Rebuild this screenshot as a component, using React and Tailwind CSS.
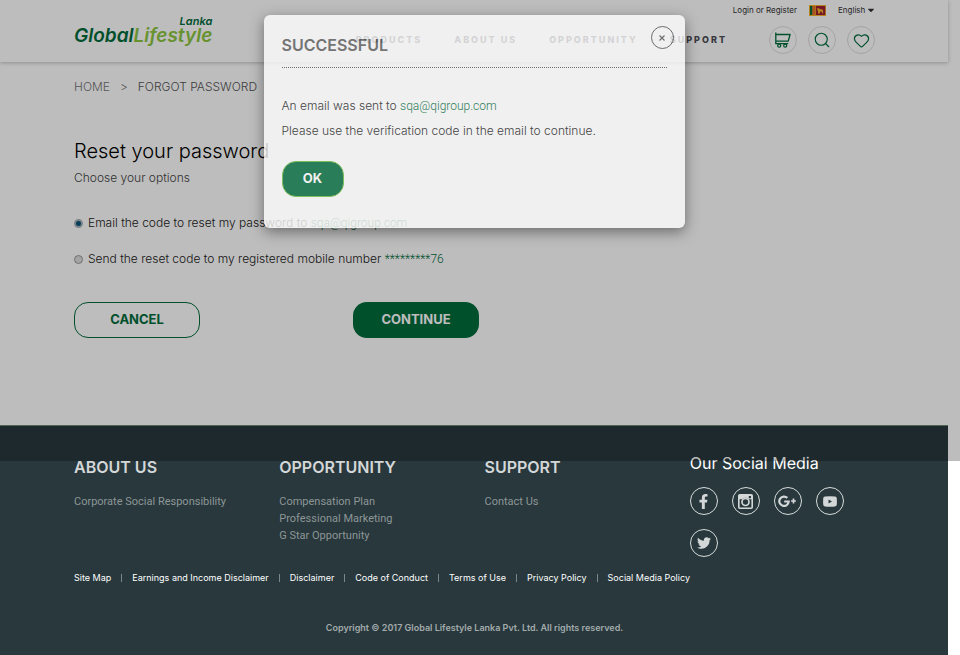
import React, { useState } from "react";
import { Search, Heart } from "lucide-react";
import { FaFacebookF, FaTwitter, FaCaretDown } from "react-icons/fa";

const navItems = ["Products", "About Us", "Opportunity", "Support"];

const footerColumns = [
  { title: "ABOUT US", links: ["Corporate Social Responsibility"] },
  {
    title: "OPPORTUNITY",
    links: ["Compensation Plan", "Professional Marketing", "G Star Opportunity"],
  },
  { title: "SUPPORT", links: ["Contact Us"] },
];

const legalLinks = [
  "Site Map",
  "Earnings and Income Disclaimer",
  "Disclaimer",
  "Code of Conduct",
  "Terms of Use",
  "Privacy Policy",
  "Social Media Policy",
];

function CartIcon() {
  return (
    <svg width="16" height="16" viewBox="0 0 16 16" fill="none" stroke="currentColor" strokeWidth="1.3">
      <path d="M.8.5v11.2h12.400" />
      <path d="M.8 2.500h14.300l-1.900 6.700H.8" strokeLinejoin="round" />
      <circle cx="4.200" cy="13.700" r="1.500" />
      <circle cx="10.200" cy="13.700" r="1.500" />
    </svg>
  );
}

function FlagIcon() {
  return (
    <svg width="17" height="11" viewBox="0 0 17 11">
      <rect width="17" height="11" fill="#f5b52a" />
      <rect x="1" y="1" width="2.5" height="9" fill="#0a6b3a" />
      <rect x="3.5" y="1" width="2.5" height="9" fill="#e8702a" />
      <rect x="6.8" y="1" width="9.4" height="9" fill="#a01f35" />
      <path d="M9 8.5V6.2L8.3 5V3.2h1.8l.8 1.1h2.2l1 .9v3.3h-1V6.8h-2.2v1.7z" fill="#f5b52a" />
    </svg>
  );
}

function InstagramIcon() {
  return (
    <svg width="15" height="15" viewBox="0 0 15 15" fill="none" stroke="currentColor">
      <rect x=".8" y=".8" width="13.4" height="13.4" rx="1" strokeWidth="1.6" />
      <path d="M1 1h13v4.200h-3.200a4.500 4.500 0 0 0-6.600 0H1z" fill="currentColor" stroke="none" />
      <circle cx="7.500" cy="8" r="3.500" strokeWidth="1.700" />
      <rect x="10.800" y="2" width="2.200" height="2.200" fill="#28383c" stroke="none" />
    </svg>
  );
}

function GooglePlusIcon() {
  return (
    <svg width="19" height="12" viewBox="0 0 19 12" fill="none" stroke="currentColor">
      <path d="M9.300 2.900A4.700 4.700 0 1 0 10.700 6.500H6.200" strokeWidth="2.200" />
      <path d="M15.500 3.600v4.800M13.100 6h4.800" strokeWidth="1.700" />
    </svg>
  );
}

function YoutubeIcon() {
  return (
    <svg width="14" height="11" viewBox="0 0 14 11" fill="currentColor">
      <path fillRule="evenodd" d="M2 .600Q7 0 12 .600 13.700.800 13.800 2.500q.200 3 0 6-.100 1.700-1.800 1.900-5 .600-10 0Q.300 10.200.200 8.500q-.200-3 0-6Q.300.800 2 .600zM5.500 3.500v4l3.500-2z" />
    </svg>
  );
}

const socialLinks = [
  { name: "Facebook", icon: <FaFacebookF size={15} /> },
  { name: "Instagram", icon: <InstagramIcon /> },
  { name: "Google Plus", icon: <GooglePlusIcon /> },
  { name: "YouTube", icon: <YoutubeIcon /> },
  { name: "Twitter", icon: <FaTwitter size={14} /> },
];

function RoundButton({ label, children }) {
  return (
    <button
      type="button"
      aria-label={label}
      className="flex size-7 items-center justify-center rounded-full border border-[#dedede] text-[#006c3c]"
    >
      {children}
    </button>
  );
}

function Header() {
  return (
    <header className="flex h-[62px] justify-between bg-white pr-[73px] pl-[74px] shadow-[0_1px_4px_rgba(0,0,0,0.25)]">
      <a href="#" className="flex flex-col items-end pt-[15px] font-semibold italic text-[#006c3c]">
        <span className="text-[11px] leading-3">Lanka</span>
        <span className="text-[19px] leading-[18px]">
          Global<span className="text-[#8cc63f]">Lifestyle</span>
        </span>
      </a>
      <div className="flex flex-col items-end">
        <div className="flex h-5 items-center gap-3 text-[8px] text-[#333]">
          <a href="#">Login or Register</a>
          <FlagIcon />
          <label className="flex items-center">
            <select aria-label="Language" className="appearance-none bg-transparent">
              <option>English</option>
            </select>
            <FaCaretDown size={10} className="-mr-px" />
          </label>
        </div>
        <div className="flex h-10 items-center gap-[42px]">
          <nav className="flex gap-8 text-[9px] font-extrabold uppercase tracking-[2px] text-[#4d4d55]">
            {navItems.map((item) => (
              <a key={item} href="#">
                {item}
              </a>
            ))}
          </nav>
          <div className="flex gap-[11px]">
            <RoundButton label="Cart">
              <CartIcon />
            </RoundButton>
            <RoundButton label="Search">
              <Search size={18} strokeWidth={1.5} />
            </RoundButton>
            <RoundButton label="Wish list">
              <Heart size={17} strokeWidth={1.7} />
            </RoundButton>
          </div>
        </div>
      </div>
    </header>
  );
}

function ResetForm() {
  const [method, setMethod] = useState("email");
  const options = [
    { id: "email", text: "Email the code to reset my password to", target: "sqa@qigroup.com" },
    { id: "mobile", text: "Send the reset code to my registered mobile number", target: "*********76" },
  ];
  return (
    <main className="pt-4 pr-[73px] pb-[87px] pl-[74px] font-light">
      <nav aria-label="Breadcrumb" className="flex gap-[10px] text-xs leading-[18px] text-[#757575]">
        <a href="#">HOME</a>
        <span>&gt;</span>
        <span className="text-[#555]">FORGOT PASSWORD</span>
      </nav>
      <h1 className="mt-10 text-xl leading-[30px] text-black">Reset your password</h1>
      <p className="mt-[3px] text-xs leading-[18px] text-[#444]">Choose your options</p>
      <form onSubmit={(e) => e.preventDefault()}>
        <div className="mt-[27px] flex flex-col gap-[18px] text-xs leading-[18px] text-[#222]">
          {options.map((o) => (
            <label key={o.id} className="flex items-center gap-[5px]">
              <input
                type="radio"
                name="method"
                checked={method === o.id}
                onChange={() => setMethod(o.id)}
                className="size-[9px] appearance-none rounded-full border border-[#999] bg-[#ddd] checked:border-2 checked:border-[#a8b4bb] checked:bg-[#0a5378]"
              />
              <span>
                {o.text} <span className="font-['Roboto',sans-serif] leading-4 text-[#006c3c]">{o.target}</span>
              </span>
            </label>
          ))}
        </div>
        <div className="mt-[34px] flex gap-[153px]">
          <button
            type="button"
            className="h-9 w-[126px] rounded-[14px] border border-[#006c3c] text-[13px] font-bold text-[#006c3c]"
          >
            CANCEL
          </button>
          <button type="submit" className="h-9 w-[126px] rounded-[14px] bg-[#006c3c] text-[13px] font-bold text-white">
            CONTINUE
          </button>
        </div>
      </form>
    </main>
  );
}

function Footer() {
  return (
    <footer className="border-t border-[#6f8a72] bg-[#28383c] pr-[73px] pb-[21px] pl-[74px]">
      <div className="grid grid-cols-4 gap-5 pt-[29px]">
        {footerColumns.map((col) => (
          <section key={col.title}>
            <h2 className="text-base font-semibold leading-6 text-[#d4d7d8]">{col.title}</h2>
            <ul className="mt-[14px] whitespace-nowrap font-['Roboto',sans-serif] text-[11px] leading-[17px] text-[#8d9697]">
              {col.links.map((link) => (
                <li key={link}>
                  <a href="#">{link}</a>
                </li>
              ))}
            </ul>
          </section>
        ))}
        <section>
          <h2 className="-mt-1 whitespace-nowrap text-base leading-6 text-white">Our Social Media</h2>
          <div className="mt-3 flex flex-wrap gap-[14px]">
            {socialLinks.map((s) => (
              <a
                key={s.name}
                href="#"
                aria-label={s.name}
                className="flex size-7 items-center justify-center rounded-full border border-[#d9dddd] text-[#d4d7d8]"
              >
                {s.icon}
              </a>
            ))}
          </div>
        </section>
      </div>
      <ul className="mt-[15px] flex gap-[10px] whitespace-nowrap text-[9px] leading-3 text-white">
        {legalLinks.map((link, i) => (
          <li key={link} className="flex items-center gap-[10px]">
            {i > 0 && <span className="h-2 w-px bg-[#7b888a]" />}
            <a href="#">{link}</a>
          </li>
        ))}
      </ul>
      <p className="mt-[38px] text-center text-[9px] font-semibold leading-3 text-[#a3abac]">
        Copyright © 2017 Global Lifestyle Lanka Pvt. Ltd. All rights reserved.
      </p>
    </footer>
  );
}

function SuccessDialog() {
  return (
    <div className="absolute inset-x-0 top-0 h-[461px] bg-black/26 pr-3">
      <div
        role="dialog"
        aria-labelledby="dialog-title"
        className="relative mx-auto mt-[15px] w-[421px] rounded-md bg-white px-[18px] pt-[18px] pb-[31px] opacity-78 shadow-[0_4px_14px_rgba(0,0,0,0.55)]"
      >
        <button
          type="button"
          aria-label="Close"
          className="absolute top-[11px] right-[11px] flex size-[23px] items-center justify-center rounded-full border border-[#555] text-[#555]"
        >
          <svg width="6" height="6" viewBox="0 0 6 6" stroke="currentColor" strokeWidth="1.1">
            <path d="M.5.5l5 5M5.5.5l-5 5" />
          </svg>
        </button>
        <h2
          id="dialog-title"
          className="border-b border-dotted border-[#555] pb-[10px] text-base font-semibold leading-6 text-[#606060]"
        >
          SUCCESSFUL
        </h2>
        <div className="mt-[25px] text-xs font-light leading-[25px] text-[#222]">
          <p>
            An email was sent to{" "}
            <span className="font-['Roboto',sans-serif] leading-4 text-[#006c3c]">sqa@qigroup.com</span>
          </p>
          <p>Please use the verification code in the email to continue.</p>
        </div>
        <button
          type="button"
          className="mt-[18px] h-9 w-[62px] rounded-[14px] border border-[#6cbf45] bg-[#006c3c] text-[13px] font-bold text-white"
        >
          OK
        </button>
      </div>
    </div>
  );
}

export default function App() {
  return (
    <div className="relative min-h-screen bg-white font-['Inter',sans-serif]">
      <div className="mr-3">
        <Header />
        <ResetForm />
        <Footer />
      </div>
      <SuccessDialog />
    </div>
  );
}
